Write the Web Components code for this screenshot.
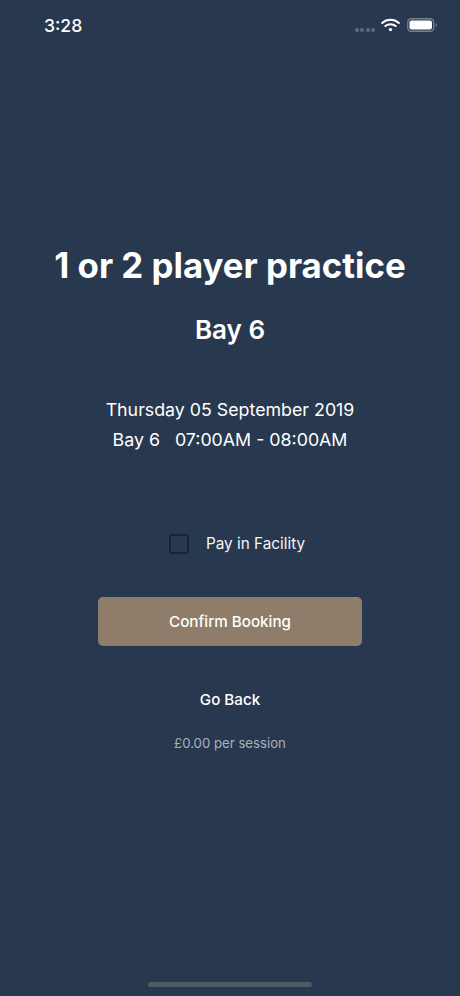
<!DOCTYPE html>
<html lang="en">
<head>
<meta charset="utf-8">
<title>Confirm Booking</title>
<style>
    html, body { margin: 0; height: 100%; background: #28384e; }
    body { font-family: Inter, "Liberation Sans", sans-serif; color: #fff; }
</style>
</head>
<body>
<booking-screen>
    <status-bar slot="status" time="3:28"></status-bar>
    <span slot="title">1 or 2 player practice</span>
    <span slot="bay">Bay 6</span>
    <span slot="date">Thursday 05 September 2019</span>
    <span slot="slot-time">Bay 6&nbsp;&nbsp; 07:00AM - 08:00AM</span>
    <check-row slot="check">Pay in Facility</check-row>
    <confirm-button slot="confirm">Confirm Booking</confirm-button>
    <span slot="back">Go Back</span>
    <span slot="price">£0.00 per session</span>
</booking-screen>

<script>
class StatusBar extends HTMLElement {
    constructor() {
        super();
        this.root = this.attachShadow({ mode: "open" });
    }
    connectedCallback() {
        this.root.innerHTML = `
        <style>
            :host { display: flex; align-items: center; justify-content: space-between; height: 50px; padding: 0 23px 0 44px; box-sizing: border-box; }
            .time { font-size: 17.6px; font-weight: 500; line-height: 50px; margin-top: 1px; }
            .icons { display: flex; align-items: center; }
            .dots { display: flex; gap: 1.500px; margin-top: 10px; margin-right: 6px; }
            .dots i { width: 4px; height: 4px; border-radius: 50%; background: #5e6c80; }
            svg { display: block; }
            .battery { margin-left: 7px; }
        </style>
        <span class="time">${this.getAttribute("time")}</span>
        <div class="icons">
            <div class="dots"><i></i><i></i><i></i><i></i></div>
            <svg width="19" height="14" viewBox="0 0 19 14" fill="none" stroke="#fff" stroke-linecap="round">
                <path d="M1.2 5C6 .7 13 .7 17.8 5" stroke-width="2"/>
                <path d="M4.3 8c2.9-2.4 7.5-2.4 10.4 0" stroke-width="2"/>
                <circle cx="9.5" cy="11.6" r="1.7" fill="#fff" stroke="none"/>
            </svg>
            <svg class="battery" width="30" height="14" viewBox="0 0 30 14">
                <rect x=".75" y=".75" width="26" height="12.5" rx="3.5" fill="none" stroke="#77828f" stroke-width="1.3"/>
                <rect x="2.5" y="2.5" width="22.5" height="9" rx="2" fill="#fff"/>
                <path d="M28.6 5v4c.8-.3 1.2-1 1.2-2s-.4-1.700-1.200-2z" fill="#77828f"/>
            </svg>
        </div>`;
    }
}

class CheckRow extends HTMLElement {
    constructor() {
        super();
        this.root = this.attachShadow({ mode: "open" });
        this.root.innerHTML = `
        <style>
            :host { display: flex; align-items: center; justify-content: center; gap: 17px; font-size: 15.3px; line-height: 20px; color: #f4f6f8; padding-left: 14px; }
            .box { width: 16px; height: 16px; border: 2px solid #14253a; border-radius: 2px; }
        </style>
        <div class="box"></div>
        <slot></slot>`;
    }
}

class ConfirmButton extends HTMLElement {
    constructor() {
        super();
        this.root = this.attachShadow({ mode: "open" });
        this.root.innerHTML = `
        <style>
            :host { display: flex; align-items: center; justify-content: center; width: 264px; height: 49px; background: #8f7d69; border-radius: 5px; font-size: 15.2px; font-weight: 500; color: #fff; }
        </style>
        <slot></slot>`;
    }
}

class BookingScreen extends HTMLElement {
    constructor() {
        super();
        this.root = this.attachShadow({ mode: "open" });
        this.root.innerHTML = `
        <style>
            :host { display: flex; flex-direction: column; align-items: center; width: 460px; height: 996px; position: relative; overflow: hidden; background: #28384e; text-align: center; }
            .status { align-self: stretch; }
            .title { margin-top: 193px; font-size: 34.8px; line-height: 44px; font-weight: 700; }
            .bay { margin-top: 27px; font-size: 26px; line-height: 32px; font-weight: 600; }
            .date { margin-top: 49px; font-size: 17.8px; line-height: 30px; }
            .time { font-size: 17.8px; line-height: 30px; }
            .check { margin-top: 79px; width: 100%; }
            .confirm { margin-top: 43px; }
            .back { margin-top: 44px; font-size: 15.2px; line-height: 20px; font-weight: 500; }
            .price { margin-top: 23px; font-size: 13.2px; line-height: 20px; color: #a9b1bc; }
            .home { position: absolute; left: 148px; bottom: 9px; width: 164px; height: 5px; border-radius: 3px; background: #4f5a63; }
        </style>
        <div class="status"><slot name="status"></slot></div>
        <div class="title"><slot name="title"></slot></div>
        <div class="bay"><slot name="bay"></slot></div>
        <div class="date"><slot name="date"></slot></div>
        <div class="time"><slot name="slot-time"></slot></div>
        <div class="check"><slot name="check"></slot></div>
        <div class="confirm"><slot name="confirm"></slot></div>
        <div class="back"><slot name="back"></slot></div>
        <div class="price"><slot name="price"></slot></div>
        <div class="home"></div>`;
    }
}

customElements.define("status-bar", StatusBar);
customElements.define("check-row", CheckRow);
customElements.define("confirm-button", ConfirmButton);
customElements.define("booking-screen", BookingScreen);
</script>
</body>
</html>
